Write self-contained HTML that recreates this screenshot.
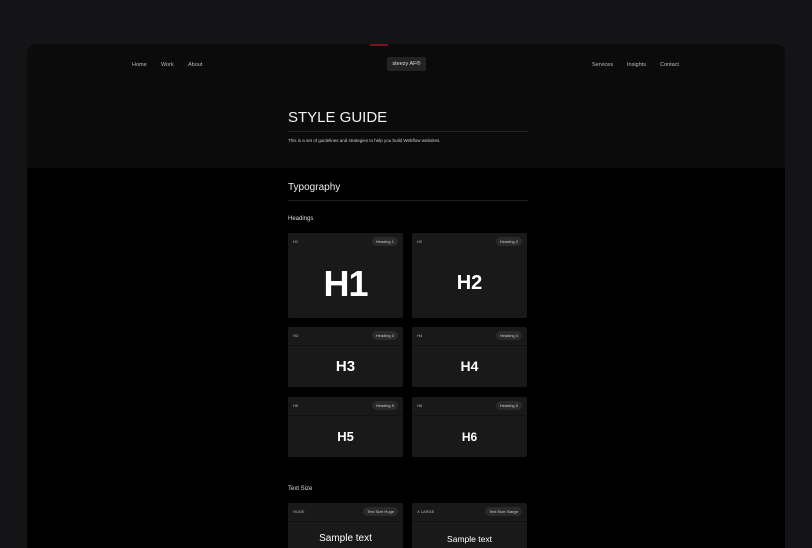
<!DOCTYPE html>
<html><head><style>
*{margin:0;padding:0;box-sizing:border-box}
html,body{width:812px;height:548px;overflow:hidden}
body{background:#141417;font-family:"Liberation Sans",sans-serif;color:#eee;position:relative}
.frame{position:absolute;left:27px;top:44px;width:758px;height:504px;background:#000;border-radius:10px 10px 0 0;overflow:hidden}
.hdr{position:absolute;left:0;top:0;width:758px;height:124px;background:#0b0b0c}
.red{position:absolute;left:343px;top:0;width:18px;height:2px;background:#7a1020}
.nav{position:absolute;top:18px;font-size:5.5px;color:#bbb}
.logo{position:absolute;left:360px;top:13px;width:39px;height:14px;background:#232325;border-radius:2px;font-size:5.5px;color:#ddd;text-align:center;line-height:14px}
.t{position:absolute;left:261px}
.line{position:absolute;left:261px;width:240px;height:1px;background:#1e1e1e}
.card{position:absolute;width:115px;background:#191919;border-radius:2px}
.card .l{position:absolute;left:5px;top:6px;font-size:4px;color:#bbb}
.card .p{position:absolute;right:5px;top:4px;font-size:4px;color:#ccc;background:#2a2a2a;border-radius:5px;padding:2px 4px}
.card .s{position:absolute;left:0;width:115px;height:1px;background:#111}
.card .h{position:absolute;left:0;width:115px;text-align:center;color:#fff;font-weight:bold}
</style></head><body>
<div class="frame">
<div class="hdr"></div><div class="red"></div>
<div class="nav" style="left:105px">Home</div>
<div class="nav" style="left:134px">Work</div>
<div class="nav" style="left:161px">About</div>
<div class="logo">steezy AF®</div>
<div class="nav" style="left:565px">Services</div>
<div class="nav" style="left:600px">Insights</div>
<div class="nav" style="left:633px">Contact</div>
<div class="t" style="top:65px;font-size:15px;color:#f2f2f2">STYLE GUIDE</div>
<div class="line" style="top:87px;background:#222"></div>
<div class="t" style="top:94px;font-size:4.5px;color:#ccc">This is a set of guidelines and strategies to help you build Webflow websites.</div>
<div class="t" style="top:138px;font-size:10px;color:#eee">Typography</div>
<div class="line" style="top:156px"></div>
<div class="t" style="top:172px;font-size:6px;color:#ddd">Headings</div>

<div class="card" style="left:261px;top:189px;height:85px"><span class="l">H1</span><span class="p">Heading 1</span><div class="h" style="top:30px;font-size:36px;letter-spacing:-1px">H1</div></div>
<div class="card" style="left:385px;top:189px;height:85px"><span class="l">H2</span><span class="p">Heading 2</span><div class="h" style="top:39px;font-size:20px">H2</div></div>
<div class="card" style="left:261px;top:283px;height:60px"><span class="l">H3</span><span class="p">Heading 3</span><div class="s" style="top:18px"></div><div class="h" style="top:31px;font-size:15px">H3</div></div>
<div class="card" style="left:385px;top:283px;height:60px"><span class="l">H4</span><span class="p">Heading 4</span><div class="s" style="top:18px"></div><div class="h" style="top:31px;font-size:14px">H4</div></div>
<div class="card" style="left:261px;top:353px;height:60px"><span class="l">H5</span><span class="p">Heading 5</span><div class="s" style="top:18px"></div><div class="h" style="top:32px;font-size:13px">H5</div></div>
<div class="card" style="left:385px;top:353px;height:60px"><span class="l">H6</span><span class="p">Heading 6</span><div class="s" style="top:18px"></div><div class="h" style="top:33px;font-size:12px">H6</div></div>

<div class="t" style="top:442px;font-size:6px;color:#ddd">Text Size</div>
<div class="card" style="left:261px;top:459px;height:60px"><span class="l">HUGE</span><span class="p">Text Size Huge</span><div class="s" style="top:18px"></div><div class="h" style="top:30px;font-size:10px;font-weight:normal">Sample text</div></div>
<div class="card" style="left:385px;top:459px;height:60px"><span class="l">X LARGE</span><span class="p">Text Size Xlarge</span><div class="s" style="top:18px"></div><div class="h" style="top:31px;font-size:8.5px;font-weight:normal">Sample text</div></div>
</div>
</body></html>
